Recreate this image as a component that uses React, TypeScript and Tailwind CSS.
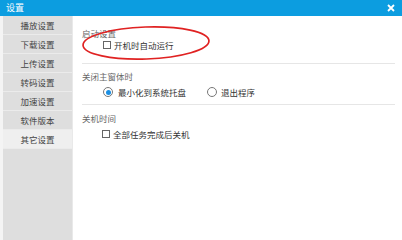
import React from "react";

const items = ["播放设置", "下载设置", "上传设置", "转码设置", "加速设置", "软件版本", "其它设置"];

function Checkbox() {
  return <span className="inline-block w-[8px] h-[8px] border border-[#666] bg-white box-border" />;
}

function Radio({ checked }: { checked?: boolean }) {
  return (
    <span className="w-[10px] h-[10px] rounded-full border border-[#777] bg-white box-border flex items-center justify-center">
      {checked && <span className="w-[5px] h-[5px] rounded-full bg-[#1a8fe3]" />}
    </span>
  );
}

export default function App() {
  return (
    <div
      className="w-[402px] h-[240px] flex flex-col bg-white relative overflow-hidden"
      style={{ fontFamily: '"Noto Sans CJK SC", "Noto Sans", sans-serif' }}
    >
      <div className="h-[16px] bg-[#0c9de0] flex items-center justify-between pl-[6px] pr-[7px]">
        <span className="text-white text-[9px] leading-[12px]">设置</span>
        <svg width="8" height="8" viewBox="0 0 8 8">
          <path d="M1 1 L7 7 M7 1 L1 7" stroke="white" strokeWidth="1.8" />
        </svg>
      </div>
      <div className="flex flex-1">
        <div className="w-[3px] bg-[#f4f4f4]" />
        <div className="w-[70px] bg-[#dedede] border-r border-[#e9e9e9] flex flex-col">
          {items.map((t, i) => (
            <div
              key={t}
              className={
                "h-[19px] flex items-center justify-center text-[8.5px] text-[#444] border-b border-[#ebebeb] " +
                (i === 6 ? "bg-[#efefef]" : "")
              }
            >
              {t}
            </div>
          ))}
        </div>
        <div className="flex-1 flex flex-col pl-[9px] pr-[7px] pt-[11px] text-[8.5px] leading-[12px]">
          <div className="text-[#666]">启动设置</div>
          <div className="flex items-center gap-[3px] ml-[21px] text-[#333] h-[12px]">
            <Checkbox />
            <span>开机时自动运行</span>
          </div>
          <div className="mt-[12px] h-px bg-[#e6e6e6]" />
          <div className="mt-[6px] text-[#666]">关闭主窗体时</div>
          <div className="mt-[4px] flex items-center ml-[21px] text-[#333] h-[12px]">
            <Radio checked />
            <span className="ml-[5px]">最小化到系统托盘</span>
            <span className="ml-[21px]"><Radio /></span>
            <span className="ml-[4px]">退出程序</span>
          </div>
          <div className="mt-[6px] h-px bg-[#e6e6e6]" />
          <div className="mt-[7px] text-[#666]">关机时间</div>
          <div className="mt-[4px] flex items-center gap-[3px] ml-[20px] text-[#333] h-[12px]">
            <Checkbox />
            <span>全部任务完成后关机</span>
          </div>
        </div>
      </div>
      <svg className="absolute left-0 top-0 pointer-events-none" width="402" height="240">
        <ellipse cx="146" cy="43" rx="63" ry="16" fill="none" stroke="#e02222" strokeWidth="1.7" transform="rotate(-2 146 43)" />
      </svg>
    </div>
  );
}
